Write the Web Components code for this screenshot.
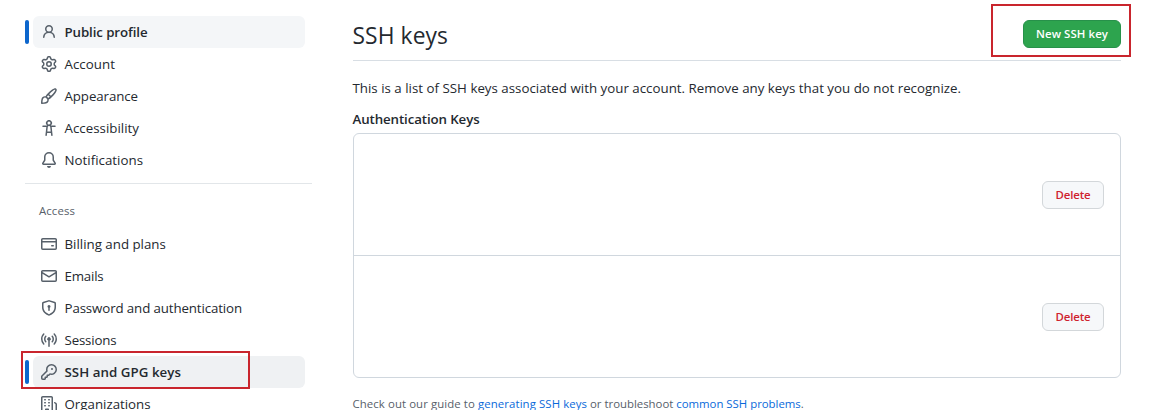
<!DOCTYPE html>
<html lang="en">
<head>
<meta charset="utf-8">
<title>SSH and GPG keys</title>
<style>
body{margin:0;background:#fff;color:#24292f;font:13.3px/20px "Open Sans","Noto Sans",sans-serif;width:1170px;height:410px;overflow:hidden}
</style>
</head>
<body>
<settings-page>
  <side-nav slot="nav">
    <nav-item icon="person" current style="--ls:-.099px">Public profile</nav-item>
    <nav-item icon="gear" style="--ls:.044px">Account</nav-item>
    <nav-item icon="brush" style="--ls:-.085px">Appearance</nav-item>
    <nav-item icon="access" style="--ls:.019px">Accessibility</nav-item>
    <nav-item icon="bell" style="--ls:.017px">Notifications</nav-item>
    <nav-heading>Access</nav-heading>
    <nav-item icon="card">Billing and plans</nav-item>
    <nav-item icon="mail" style="--ls:-.2px">Emails</nav-item>
    <nav-item icon="shield" style="--ls:-.118px">Password and authentication</nav-item>
    <nav-item icon="broadcast" style="--ls:-.16px">Sessions</nav-item>
    <nav-item icon="key" current marked style="--ls:.047px;--bg:#eff1f3">SSH and GPG keys</nav-item>
    <nav-item icon="org">Organizations</nav-item>
  </side-nav>
  <ssh-keys>
    <action-button slot="action" primary marked>New SSH key</action-button>
    <key-row><action-button>Delete</action-button></key-row>
    <key-row><action-button>Delete</action-button></key-row>
  </ssh-keys>
</settings-page>
<script>
const ICONS = {
person:'M10.561 8.073a6.005 6.005 0 0 1 3.432 5.142.75.75 0 1 1-1.498.07 4.5 4.5 0 0 0-8.99 0 .75.75 0 0 1-1.498-.07 6.004 6.004 0 0 1 3.431-5.142 3.999 3.999 0 1 1 5.123 0ZM10.5 5a2.5 2.5 0 1 0-5 0 2.5 2.5 0 0 0 5 0Z',
gear:'M8 0a8.2 8.2 0 0 1 .701.031C9.444.095 9.99.645 10.16 1.29l.288 1.107c.018.066.079.158.212.224.231.114.454.243.668.386.123.082.233.09.299.071l1.103-.303c.644-.176 1.392.021 1.82.63.27.385.506.792.704 1.218.315.675.111 1.422-.364 1.891l-.814.806c-.049.048-.098.147-.088.294.016.257.016.515 0 .772-.01.147.038.246.088.294l.814.806c.475.469.679 1.216.364 1.891a7.977 7.977 0 0 1-.704 1.217c-.428.61-1.176.807-1.82.63l-1.102-.302c-.067-.019-.177-.011-.3.071a5.909 5.909 0 0 1-.668.386c-.133.066-.194.158-.211.224l-.29 1.106c-.168.646-.715 1.196-1.458 1.26a8.006 8.006 0 0 1-1.402 0c-.743-.064-1.289-.614-1.458-1.26l-.289-1.106c-.018-.066-.079-.158-.212-.224a5.738 5.738 0 0 1-.668-.386c-.123-.082-.233-.09-.299-.071l-1.103.303c-.644.176-1.392-.021-1.82-.63a8.12 8.12 0 0 1-.704-1.218c-.315-.675-.111-1.422.363-1.891l.815-.806c.05-.048.098-.147.088-.294a6.214 6.214 0 0 1 0-.772c.01-.147-.038-.246-.088-.294l-.815-.806C.635 6.045.431 5.298.746 4.623a7.92 7.92 0 0 1 .704-1.217c.428-.61 1.176-.807 1.82-.63l1.102.302c.067.019.177.011.3-.071.214-.143.437-.272.668-.386.133-.066.194-.158.211-.224l.29-1.106C6.009.645 6.556.095 7.299.03 7.53.01 7.764 0 8 0Zm-.571 1.525c-.036.003-.108.036-.137.146l-.289 1.105c-.147.561-.549.967-.998 1.189-.173.086-.34.183-.5.29-.417.278-.97.423-1.529.27l-1.103-.303c-.109-.03-.175.016-.195.045-.22.312-.412.644-.573.99-.014.031-.021.11.059.19l.815.806c.411.406.562.957.53 1.456a4.709 4.709 0 0 0 0 .582c.032.499-.119 1.05-.53 1.456l-.815.806c-.081.08-.073.159-.059.19.162.346.353.677.573.989.02.03.085.076.195.046l1.102-.303c.56-.153 1.113-.008 1.53.27.161.107.328.204.501.29.447.222.85.629.997 1.189l.289 1.105c.029.109.101.143.137.146a6.6 6.6 0 0 0 1.142 0c.036-.003.108-.036.137-.146l.289-1.105c.147-.561.549-.967.998-1.189.173-.086.34-.183.5-.29.417-.278.97-.423 1.529-.27l1.103.303c.109.029.175-.016.195-.045.22-.313.411-.644.573-.99.014-.031.021-.11-.059-.19l-.815-.806c-.411-.406-.562-.957-.53-1.456a4.709 4.709 0 0 0 0-.582c-.032-.499.119-1.05.53-1.456l.815-.806c.081-.08.073-.159.059-.19a6.464 6.464 0 0 0-.573-.989c-.02-.03-.085-.076-.195-.046l-1.102.303c-.56.153-1.113.008-1.53-.27a4.44 4.44 0 0 0-.501-.29c-.447-.222-.85-.629-.997-1.189l-.289-1.105c-.029-.11-.101-.143-.137-.146a6.6 6.6 0 0 0-1.142 0ZM11 8a3 3 0 1 1-6 0 3 3 0 0 1 6 0ZM9.5 8a1.5 1.5 0 1 0-3.001.001A1.5 1.5 0 0 0 9.5 8Z',
brush:'M11.134 1.535c.7-.509 1.416-.942 2.076-1.155.649-.21 1.463-.267 2.069.34.603.601.568 1.411.368 2.07-.202.668-.624 1.39-1.125 2.096-1.011 1.424-2.496 2.987-3.775 4.249-1.098 1.084-2.132 1.839-3.04 2.3a3.744 3.744 0 0 1-1.055 3.217c-.431.431-1.065.691-1.657.861-.614.177-1.294.287-1.914.357A21.151 21.151 0 0 1 .797 16H.743l.007-.75H.749L.742 16a.75.75 0 0 1-.743-.742l.743-.008-.742.007v-.054a21.25 21.25 0 0 1 .13-2.284c.067-.647.187-1.287.358-1.914.17-.591.43-1.226.86-1.657a3.746 3.746 0 0 1 3.227-1.054c.466-.893 1.225-1.907 2.314-2.982 1.271-1.255 2.833-2.75 4.245-3.777ZM1.62 13.089c-.051.464-.086.929-.104 1.395.466-.018.932-.053 1.396-.104a10.511 10.511 0 0 0 1.668-.309c.526-.151.856-.325 1.011-.48a2.25 2.25 0 1 0-3.182-3.182c-.155.155-.329.485-.48 1.01a10.515 10.515 0 0 0-.309 1.67Zm10.396-10.34c-1.224.89-2.605 2.189-3.822 3.384l1.718 1.718c1.21-1.205 2.51-2.597 3.387-3.833.47-.662.78-1.227.912-1.662.134-.444.032-.551.009-.575h-.001V1.78c-.014-.014-.113-.113-.548.027-.432.14-.995.462-1.655.942Zm-4.832 7.266-.001.001a9.859 9.859 0 0 0 1.63-1.142L7.155 7.216a9.7 9.7 0 0 0-1.161 1.607c.482.302.889.71 1.19 1.192Z',
access:'M9.923 5.302c.063.063.122.129.178.198H14A.75.75 0 0 1 14 7h-3.3l.578 5.163.362 2.997a.75.75 0 0 1-1.49.18L9.868 13H6.132l-.282 2.34a.75.75 0 0 1-1.49-.18l.362-2.997L5.3 7H2a.75.75 0 0 1 0-1.5h3.9a2.54 2.54 0 0 1 .176-.198 3 3 0 1 1 3.847 0ZM9.2 7.073h-.001a1.206 1.206 0 0 0-2.398 0L6.305 11.5h3.39ZM9.5 3a1.5 1.5 0 1 0-3.001.001A1.5 1.5 0 0 0 9.5 3Z',
bell:'M8 16a2 2 0 0 0 1.985-1.75c.017-.137-.097-.25-.235-.25h-3.5c-.138 0-.252.113-.235.25A2 2 0 0 0 8 16ZM3 5a5 5 0 0 1 10 0v2.947c0 .05.015.098.042.139l1.703 2.555A1.519 1.519 0 0 1 13.482 13H2.518a1.516 1.516 0 0 1-1.263-2.36l1.703-2.554A.255.255 0 0 0 3 7.947Zm5-3.5A3.5 3.5 0 0 0 4.5 5v2.947c0 .346-.102.683-.294.97l-1.703 2.556a.017.017 0 0 0-.003.01l.001.006c0 .002.002.004.004.006l.006.004.007.001h10.964l.007-.001.006-.004.004-.006.001-.007a.017.017 0 0 0-.003-.01l-1.703-2.554a1.745 1.745 0 0 1-.294-.97V5A3.5 3.5 0 0 0 8 1.5Z',
card:'M10.75 9a.75.75 0 0 0 0 1.5h1.5a.75.75 0 0 0 0-1.5h-1.5Z M0 3.75C0 2.784.784 2 1.75 2h12.5c.966 0 1.75.784 1.75 1.75v8.5A1.75 1.75 0 0 1 14.25 14H1.75A1.75 1.75 0 0 1 0 12.25ZM14.5 6.5h-13v5.75c0 .138.112.25.25.25h12.5a.25.25 0 0 0 .25-.25Zm0-2.75a.25.25 0 0 0-.25-.25H1.75a.25.25 0 0 0-.25.25V5h13Z',
mail:'M1.75 2h12.5c.966 0 1.75.784 1.75 1.75v8.5A1.75 1.75 0 0 1 14.25 14H1.75A1.75 1.75 0 0 1 0 12.25v-8.5C0 2.784.784 2 1.75 2ZM1.5 12.251c0 .138.112.25.25.25h12.5a.25.25 0 0 0 .25-.25V5.809L8.38 9.397a.75.75 0 0 1-.76 0L1.5 5.809v6.442Zm13-8.181v-.32a.25.25 0 0 0-.25-.25H1.75a.25.25 0 0 0-.25.25v.32L8 7.88Z',
shield:'m8.533.133 5.25 1.68A1.75 1.75 0 0 1 15 3.48V7c0 1.566-.32 3.182-1.303 4.682-.983 1.498-2.585 2.813-5.032 3.855a1.697 1.697 0 0 1-1.33 0c-2.447-1.042-4.049-2.357-5.032-3.855C1.32 10.182 1 8.566 1 7V3.48a1.75 1.75 0 0 1 1.217-1.667l5.25-1.68a1.748 1.748 0 0 1 1.066 0Zm-.61 1.429.001.001-5.25 1.68a.251.251 0 0 0-.174.237V7c0 1.36.275 2.666 1.057 3.859.784 1.194 2.121 2.342 4.366 3.298a.196.196 0 0 0 .154 0c2.245-.957 3.582-2.103 4.366-3.297C13.225 9.666 13.5 8.358 13.5 7V3.48a.25.25 0 0 0-.174-.238l-5.25-1.68a.25.25 0 0 0-.153 0ZM9.5 6.5c0 .536-.286 1.032-.75 1.3v2.45a.75.75 0 0 1-1.5 0V7.8A1.5 1.5 0 1 1 9.5 6.5Z',
broadcast:'M8.75 8.582v5.668a.75.75 0 0 1-1.5 0V8.582a1.75 1.75 0 1 1 1.5 0Zm3.983-7.125a.75.75 0 0 1 1.06.026A7.976 7.976 0 0 1 16 7c0 2.139-.84 4.083-2.207 5.517a.75.75 0 1 1-1.086-1.034A6.474 6.474 0 0 0 14.5 7a6.474 6.474 0 0 0-1.793-4.483.75.75 0 0 1 .026-1.06Zm-9.466 0c.3.286.312.76.026 1.06A6.474 6.474 0 0 0 1.5 7a6.47 6.47 0 0 0 1.793 4.483.75.75 0 0 1-1.086 1.034A7.973 7.973 0 0 1 0 7c0-2.139.84-4.083 2.207-5.517a.75.75 0 0 1 1.06-.026Zm8.556 2.321A4.988 4.988 0 0 1 13 7a4.988 4.988 0 0 1-1.177 3.222.75.75 0 1 1-1.146-.967A3.487 3.487 0 0 0 11.5 7c0-.86-.309-1.645-.823-2.255a.75.75 0 0 1 1.146-.967Zm-6.492.958A3.48 3.48 0 0 0 4.5 7a3.48 3.48 0 0 0 .823 2.255.75.75 0 0 1-1.146.967A4.981 4.981 0 0 1 3 7a4.982 4.982 0 0 1 1.188-3.236.75.75 0 1 1 1.143.972Z',
key:'M10.5 0a5.499 5.499 0 1 1-1.288 10.848l-.932.932a.749.749 0 0 1-.53.22H7v.75a.749.749 0 0 1-.22.53l-.5.5a.749.749 0 0 1-.53.22H5v.75a.749.749 0 0 1-.22.53l-.5.5a.749.749 0 0 1-.53.22h-2A1.75 1.75 0 0 1 0 14.25v-2c0-.199.079-.389.22-.53l4.932-4.932A5.5 5.5 0 0 1 10.5 0Zm-4 5.5c-.001.431.069.86.205 1.269a.75.75 0 0 1-.181.768L1.5 12.56v1.69c0 .138.112.25.25.25h1.69l.06-.06v-1.19a.75.75 0 0 1 .75-.75h1.19l.06-.06v-1.19a.75.75 0 0 1 .75-.75h1.19l1.023-1.025a.75.75 0 0 1 .768-.18A4 4 0 1 0 6.5 5.5ZM11 6a1 1 0 1 1 0-2 1 1 0 0 1 0 2Z',
org:'M1.75 16A1.75 1.75 0 0 1 0 14.25V1.75C0 .784.784 0 1.75 0h8.5C11.216 0 12 .784 12 1.75v12.5c0 .085-.006.168-.018.25h2.268a.25.25 0 0 0 .25-.25V8.285a.25.25 0 0 0-.111-.208l-1.055-.703a.749.749 0 1 1 .832-1.248l1.055.703c.487.325.779.871.779 1.456v5.965A1.75 1.75 0 0 1 14.25 16h-3.5a.766.766 0 0 1-.197-.026c-.099.017-.2.026-.303.026h-3a.75.75 0 0 1-.75-.75V14h-1v1.25a.75.75 0 0 1-.75.75Zm-.25-1.75c0 .138.112.25.25.25H4v-1.25a.75.75 0 0 1 .75-.75h2.5a.75.75 0 0 1 .75.75v1.25h2.25a.25.25 0 0 0 .25-.25V1.75a.25.25 0 0 0-.25-.25h-8.5a.25.25 0 0 0-.25.25ZM3.75 6h.5a.75.75 0 0 1 0 1.5h-.5a.75.75 0 0 1 0-1.5ZM3 3.75A.75.75 0 0 1 3.75 3h.5a.75.75 0 0 1 0 1.5h-.5A.75.75 0 0 1 3 3.75Zm4 3A.75.75 0 0 1 7.75 6h.5a.75.75 0 0 1 0 1.5h-.5A.75.75 0 0 1 7 6.75ZM7.75 3h.5a.75.75 0 0 1 0 1.5h-.5a.75.75 0 0 1 0-1.5ZM3 9.75A.75.75 0 0 1 3.75 9h.5a.75.75 0 0 1 0 1.5h-.5A.75.75 0 0 1 3 9.75ZM7.75 9h.5a.75.75 0 0 1 0 1.5h-.5a.75.75 0 0 1 0-1.5Z'
};
const define = (name, render) => customElements.define(name, class extends HTMLElement {
  constructor(){ super(); this.attachShadow({mode:'open'}); }
  connectedCallback(){ this.shadowRoot.innerHTML = render(this); }
});
define('settings-page', () => `<style>
:host{display:grid;grid-template-columns:287px 768px;column-gap:41px;padding:16px 0 0 25px}
</style><slot name="nav"></slot><slot></slot>`);
define('side-nav', () => `<style>:host{display:flex;flex-direction:column}</style><slot></slot>`);
define('nav-heading', () => `<style>
:host{display:block;margin-top:7px;border-top:1px solid #e2e6e9;padding:17px 0 7px 14px;height:20px;font-size:11.4px;letter-spacing:.1px;color:#57606a}
</style><slot></slot>`);
define('nav-item', el => `<style>
:host{display:flex;position:relative;height:32px}
.bar{width:4px;height:24px;margin:4px 4px 0 0;border-radius:2px}
.row{display:flex;align-items:center;gap:7.5px;width:272px;height:32px;padding-left:8px;box-sizing:border-box;border-radius:6px;letter-spacing:var(--ls,0)}
:host([current]) .bar{background:#0d66cc}
:host([current]) .row{background:var(--bg,#f4f6f8);font-weight:600}
svg{width:16px;height:16px;fill:#57606a;flex:none}
.mark{position:absolute;left:-4px;top:-5px;width:229px;height:38px;box-sizing:border-box;border:2px solid #c9252d}
</style><span class="bar"></span><span class="row"><svg viewBox="0 0 16 16"><path d="${ICONS[el.getAttribute('icon')]}"/></svg><span><slot></slot></span></span>${el.hasAttribute('marked') ? '<span class="mark"></span>' : ''}`);
define('action-button', el => `<style>
:host{display:block;position:relative}
button{display:block;width:62px;height:28px;box-sizing:border-box;padding:0;border:1px solid #d3d7da;border-radius:6px;background:#f6f8fa;color:#cf222e;font:600 11.4px/18px "Open Sans","Noto Sans",sans-serif;letter-spacing:-.12px}
:host([primary]) button{width:98px;background:#2da44e;border-color:#27914a;color:#fff;letter-spacing:.095px}
.mark{position:absolute;left:-32px;top:-16px;width:140px;height:53px;box-sizing:border-box;border:2px solid #c9252d}
</style><button><slot></slot></button>${el.hasAttribute('marked') ? '<span class="mark"></span>' : ''}`);
define('key-row', () => `<style>
:host{display:flex;justify-content:flex-end;align-items:flex-start;height:121px;box-sizing:border-box;padding:47px 16px 0 0}
:host(:not(:last-child)){height:122px;border-bottom:1px solid #d0d7de}
</style><slot></slot>`);
define('ssh-keys', () => `<style>
:host{display:block}
header{display:flex;justify-content:space-between;align-items:flex-start;height:45px;box-sizing:border-box;padding-top:4px;border-bottom:1px solid #d8dee4}
h2{margin:0;font:400 22.8px/32px "Open Sans","Noto Sans",sans-serif;letter-spacing:.088px;text-indent:-.5px}
p{margin:17px 0 11px;letter-spacing:.012px;text-indent:-.5px}
h3{margin:0;font-size:13.3px;line-height:20px;font-weight:600;letter-spacing:-.108px;text-indent:-.5px}
.box{margin-top:4px;border:1px solid #d0d7de;border-radius:6px}
footer{margin-top:16px;font-size:11.4px;line-height:20px;color:#57606a;letter-spacing:.087px;text-indent:-.5px;white-space:nowrap}
a{color:#0969da}
.tail{letter-spacing:-.01px}
</style>
<header><h2>SSH keys</h2><slot name="action"></slot></header>
<p>This is a list of SSH keys associated with your account. Remove any keys that you do not recognize.</p>
<h3>Authentication Keys</h3>
<div class="box"><slot></slot></div>
<footer>Check out our guide to <a>generating SSH keys</a><span class="tail"> or troubleshoot <a>common SSH problems</a>.</span></footer>`);
</script>
</body>
</html>
